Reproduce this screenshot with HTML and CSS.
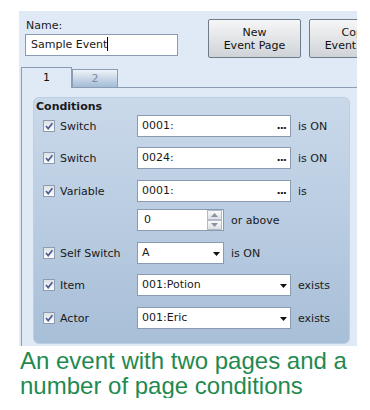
FILE: index.html
```html
<!DOCTYPE html>
<html lang="en">
<head>
    <meta charset="UTF-8">
    <meta name="viewport" content="width=device-width, initial-scale=1.0">
    <title>Event Pages</title>
    <link rel="stylesheet" href="styles.css">
</head>
<body>

<div class="window">
    <div class="header">
        <div class="name-field">
            <div class="name-label">Name:</div>
            <div class="textbox name-box">Sample Event<span class="caret"></span></div>
        </div>
        <div class="buttons">
            <button class="btn">New<br>Event Page</button>
            <button class="btn">Copy<br>Event Page</button>
        </div>
    </div>

    <div class="tabs">
        <div class="tab active">1</div>
        <div class="tab">2</div>
    </div>

    <div class="tab-page">
        <div class="group">
            <div class="group-title">Conditions</div>

            <div class="row">
                <div class="cond"><span class="check"><svg width="12" height="12" viewBox="0 0 12 12"><path d="M3 6 L5.2 8.6 L9.4 3.2" fill="none" stroke="#4d5f93" stroke-width="1.7"/></svg></span>Switch</div>
                <div class="textbox field"><span>0001:</span><span class="dots">...</span></div>
                <span class="suffix">is ON</span>
            </div>

            <div class="row">
                <div class="cond"><span class="check"><svg width="12" height="12" viewBox="0 0 12 12"><path d="M3 6 L5.2 8.6 L9.4 3.2" fill="none" stroke="#4d5f93" stroke-width="1.7"/></svg></span>Switch</div>
                <div class="textbox field"><span>0024:</span><span class="dots">...</span></div>
                <span class="suffix">is ON</span>
            </div>

            <div class="row gap-lg">
                <div class="cond"><span class="check"><svg width="12" height="12" viewBox="0 0 12 12"><path d="M3 6 L5.2 8.6 L9.4 3.2" fill="none" stroke="#4d5f93" stroke-width="1.7"/></svg></span>Variable</div>
                <div class="textbox field"><span>0001:</span><span class="dots">...</span></div>
                <span class="suffix">is</span>
            </div>

            <div class="row gap-sm">
                <div class="cond"></div>
                <div class="textbox field short spin-box">
                    <span>0</span>
                    <span class="spinner">
                        <span class="spin"><svg width="7" height="4" viewBox="0 0 7 4"><path d="M0 4 L3.5 0 L7 4Z" fill="#8a929c"/></svg></span>
                        <span class="spin"><svg width="7" height="4" viewBox="0 0 7 4"><path d="M0 0 L3.5 4 L7 0Z" fill="#8a929c"/></svg></span>
                    </span>
                </div>
                <span class="suffix">or above</span>
            </div>

            <div class="row gap-lg">
                <div class="cond"><span class="check"><svg width="12" height="12" viewBox="0 0 12 12"><path d="M3 6 L5.2 8.6 L9.4 3.2" fill="none" stroke="#4d5f93" stroke-width="1.7"/></svg></span>Self Switch</div>
                <div class="textbox field short combo"><span>A</span><svg class="arrow" width="7" height="4" viewBox="0 0 7 4"><path d="M0 0 L3.5 4 L7 0Z" fill="#111"/></svg></div>
                <span class="suffix">is ON</span>
            </div>

            <div class="row">
                <div class="cond"><span class="check"><svg width="12" height="12" viewBox="0 0 12 12"><path d="M3 6 L5.2 8.6 L9.4 3.2" fill="none" stroke="#4d5f93" stroke-width="1.7"/></svg></span>Item</div>
                <div class="textbox field combo"><span>001:Potion</span><svg class="arrow" width="7" height="4" viewBox="0 0 7 4"><path d="M0 0 L3.5 4 L7 0Z" fill="#111"/></svg></div>
                <span class="suffix">exists</span>
            </div>

            <div class="row gap-lg">
                <div class="cond"><span class="check"><svg width="12" height="12" viewBox="0 0 12 12"><path d="M3 6 L5.2 8.6 L9.4 3.2" fill="none" stroke="#4d5f93" stroke-width="1.7"/></svg></span>Actor</div>
                <div class="textbox field combo"><span>001:Eric</span><svg class="arrow" width="7" height="4" viewBox="0 0 7 4"><path d="M0 0 L3.5 4 L7 0Z" fill="#111"/></svg></div>
                <span class="suffix">exists</span>
            </div>
        </div>
    </div>
</div>

<p class="caption">An event with two pages and a number of page conditions</p>

</body>
</html>
```

FILE: styles.css
```css
body {
    margin: 0;
    background-color: #fff;
    font-family: "DejaVu Sans", sans-serif;
    font-size: 11px;
    color: #1a1a1a;
}
.window {
    margin: 11px 0 0 19px;
    width: 338px;
    height: 335px;
    background-color: #dfeaf6;
    overflow: hidden;
}
.header {
    display: flex;
    padding: 8px 0 0 6px;
}
.name-field {
    width: 153px;
    flex-shrink: 0;
}
.name-label {
    line-height: 13px;
    padding-left: 1px;
    margin-bottom: 2px;
}
.textbox {
    box-sizing: border-box;
    height: 22px;
    border: 1px solid #8a9ab0;
    background-color: #fff;
    line-height: 20px;
    padding-left: 5px;
}
.caret {
    display: inline-block;
    width: 1px;
    height: 14px;
    background-color: #000;
    vertical-align: -3px;
}
.buttons {
    display: flex;
    gap: 8px;
    margin-left: 30px;
}
.btn {
    width: 93px;
    height: 39px;
    flex-shrink: 0;
    padding: 0;
    border: 1px solid #6f7b88;
    border-radius: 2px;
    background: linear-gradient(#f6f6f6, #cfd3d8);
    font: inherit;
    line-height: 13px;
    color: #111;
}
.tabs {
    display: flex;
    align-items: flex-end;
    height: 20px;
    margin: 9px 0 0 2px;
    border-bottom: 1px solid #8c9db3;
}
.tab {
    box-sizing: border-box;
    width: 46px;
    height: 18px;
    border: 1px solid #8c9db3;
    border-bottom: none;
    background: linear-gradient(#eef3f8, #a3bcd6);
    color: #7a8ca3;
    text-align: center;
    line-height: 18px;
}
.tab.active {
    width: 51px;
    height: 21px;
    margin-bottom: -1px;
    background: #dfeaf6;
    color: #111;
    line-height: 20px;
}
.tab-page {
    margin-left: 2px;
    height: 260px;
    border-left: 1px solid #8c9db3;
    padding: 9px 0 0 11px;
}
.group {
    box-sizing: border-box;
    width: 317px;
    padding: 2px 0 14px 2px;
    border: 1px solid #bccee2;
    border-radius: 6px;
    background: linear-gradient(#cad9ea, #a8bfd8);
}
.group-title {
    font-weight: bold;
    line-height: 13px;
}
.row {
    display: flex;
    align-items: center;
    height: 22px;
    margin-top: 10px;
    padding-left: 7px;
}
.group-title + .row {
    margin-top: 2px;
}
.row.gap-lg {
    margin-top: 11px;
}
.row.gap-sm {
    margin-top: 7px;
}
.cond {
    display: flex;
    align-items: center;
    gap: 5px;
    width: 94px;
    flex-shrink: 0;
}
.check {
    box-sizing: border-box;
    width: 12px;
    height: 12px;
    border: 1px solid #8e9cb1;
    background: linear-gradient(#dde2e8, #fbfcfd);
    display: flex;
    align-items: center;
    justify-content: center;
}
.check svg {
    margin: -1px;
}
.field {
    width: 154px;
    display: flex;
    justify-content: space-between;
    align-items: center;
    padding: 0 2px 0 4px;
}
.field.short {
    width: 87px;
}
.dots {
    font-weight: bold;
    letter-spacing: -1px;
    padding-right: 2px;
}
.combo {
    padding-right: 3px;
}
.arrow {
    margin-top: 2px;
}
.spin-box {
    padding: 0 1px 0 6px;
}
.spinner {
    display: flex;
    flex-direction: column;
}
.spin {
    box-sizing: border-box;
    width: 15px;
    height: 10px;
    border: 1px solid #b3bbc6;
    background: linear-gradient(#f8f9fa, #dde1e6);
    display: flex;
    align-items: center;
    justify-content: center;
}
.suffix {
    margin-left: 7px;
}
.caption {
    margin: 2px 0 0 20px;
    width: 340px;
    font-family: "Liberation Sans", Arial, sans-serif;
    font-size: 24px;
    line-height: 25px;
    color: #1f8a50;
}
```
